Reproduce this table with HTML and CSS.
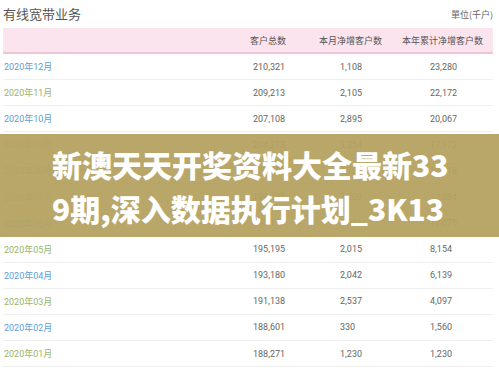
FILE: index.html
```html
<!DOCTYPE html>
<html lang="zh">
<head>
<meta charset="utf-8">
<title>有线宽带业务</title>
<link rel="stylesheet" href="styles.css">
</head>
<body>
<div class="page">
  <div class="titlebar">
    <span class="title">有线宽带业务</span>
    <span class="unit">單位(千戶)</span>
  </div>
  <div class="table">
    <div class="row head">
      <div class="c0"></div>
      <div class="c1 h1">客户总数</div>
      <div class="c2 h2">本月净增客户数</div>
      <div class="c3 h3">本年累计净增客户数</div>
    </div>
    <div class="row"><div class="c0 even">2020年12月</div><div class="c1 v1">210,321</div><div class="c2 v2">1,108</div><div class="c3 v3">23,280</div></div>
    <div class="row"><div class="c0 odd">2020年11月</div><div class="c1 v1">209,213</div><div class="c2 v2">2,105</div><div class="c3 v3">22,172</div></div>
    <div class="row"><div class="c0 even">2020年10月</div><div class="c1 v1">207,108</div><div class="c2 v2">2,895</div><div class="c3 v3">20,067</div></div>
    <div class="row"><div class="c0 odd">2020年09月</div><div class="c1 v1">204,213</div><div class="c2 v2">3,354</div><div class="c3 v3">17,172</div></div>
    <div class="row"><div class="c0 even">2020年08月</div><div class="c1 v1">200,859</div><div class="c2 v2">1,734</div><div class="c3 v3">13,818</div></div>
    <div class="row"><div class="c0 odd">2020年07月</div><div class="c1 v1">199,125</div><div class="c2 v2">2,009</div><div class="c3 v3">12,084</div></div>
    <div class="row"><div class="c0 even">2020年06月</div><div class="c1 v1">197,116</div><div class="c2 v2">1,921</div><div class="c3 v3">10,075</div></div>
    <div class="row"><div class="c0 odd">2020年05月</div><div class="c1 v1">195,195</div><div class="c2 v2">2,015</div><div class="c3 v3">8,154</div></div>
    <div class="row"><div class="c0 even">2020年04月</div><div class="c1 v1">193,180</div><div class="c2 v2">2,042</div><div class="c3 v3">6,139</div></div>
    <div class="row"><div class="c0 odd">2020年03月</div><div class="c1 v1">191,138</div><div class="c2 v2">2,537</div><div class="c3 v3">4,097</div></div>
    <div class="row"><div class="c0 even">2020年02月</div><div class="c1 v1">188,601</div><div class="c2 v2">330</div><div class="c3 v3">1,560</div></div>
    <div class="row"><div class="c0 odd">2020年01月</div><div class="c1 v1">188,271</div><div class="c2 v2">1,230</div><div class="c3 v3">1,230</div></div>
  </div>
  <div class="banner">
    <div class="banner-text">新澳天天开奖资料大全最新33<br>9期,深入数据执行计划_3K13</div>
  </div>
</div>
</body>
</html>
```

FILE: styles.css
```css
html, body {
  margin: 0;
  padding: 0;
  background: #ffffff;
}
body {
  width: 499px;
  height: 371px;
  overflow: hidden;
  font-family: Roboto, "Noto Sans CJK SC", sans-serif;
}
.page {
  position: relative;
  width: 499px;
  height: 371px;
}
.titlebar {
  height: 28px;
  padding: 0 6px 2px 3px;
  box-sizing: border-box;
  display: flex;
  justify-content: space-between;
  align-items: center;
}
.title {
  font-family: "Noto Sans CJK SC", sans-serif;
  font-size: 13px;
  color: #555555;
}
.unit {
  font-family: "Noto Sans CJK TC", "Noto Sans CJK SC", sans-serif;
  font-size: 9px;
  color: #666666;
  padding-top: 2px;
}
.table {
  margin: 0 6px 0 3px;
}
.row {
  display: grid;
  grid-template-columns: 247px 66px 83px 94px;
  height: 26.1px;
  box-sizing: border-box;
  border-bottom: 1px solid #efefef;
  align-items: center;
  font-size: 9px;
  color: #666666;
}
.row.head {
  height: 26px;
  background: #fce4ee;
  border-bottom: 2px solid #ebc6d5;
  color: #555555;
  font-family: "Noto Sans CJK SC", sans-serif;
}
.c0 {
  padding-left: 1px;
  font-size: 9px;
}
.even { color: #5e9ed7; }
.odd { color: #9ab46c; }
.h1 { padding-left: 0; }
.h2 { padding-left: 3px; }
.h3 { padding-left: 3px; }
.v1 { padding-left: 3px; }
.v2 { padding-left: 24px; }
.v3 { padding-left: 31px; }
.banner {
  position: absolute;
  left: 0;
  top: 134px;
  width: 499px;
  height: 103px;
  box-sizing: border-box;
  padding-left: 52px;
  background: rgba(181, 161, 97, 0.94);
  display: flex;
  align-items: center;
  justify-content: flex-start;
}
.banner-text {
  font-family: "Noto Sans CJK SC", sans-serif;
  font-weight: 900;
  font-size: 30px;
  line-height: 44px;
  color: #ffffff;
  text-align: left;
  white-space: nowrap;
  padding-top: 1px;
}
```
